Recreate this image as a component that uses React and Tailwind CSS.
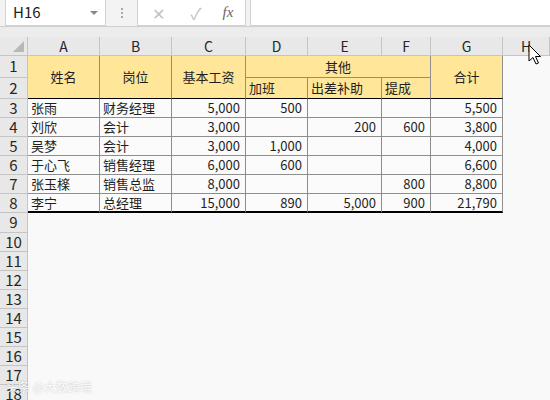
import React from 'react';

const COLS = ['A', 'B', 'C', 'D', 'E', 'F', 'G', 'H'];

// Data rows 3-8: name, role, base, overtime, travel, commission, total
const ROWS = [
  ['张雨', '财务经理', '5,000', '500', '', '', '5,500'],
  ['刘欣', '会计', '3,000', '', '200', '600', '3,800'],
  ['吴梦', '会计', '3,000', '1,000', '', '', '4,000'],
  ['于心飞', '销售经理', '6,000', '600', '', '', '6,600'],
  ['张玉檪', '销售总监', '8,000', '', '', '800', '8,800'],
  ['李宁', '总经理', '15,000', '890', '5,000', '900', '21,790'],
];

const cellBorder = 'border-r border-b border-[#8e8e8e]';
const rowHead =
  'flex items-center justify-center bg-[#e8e8e8] border-r border-b border-[#c4c4c4] text-[15px] text-[#262626]';
const mergedHead =
  'row-span-2 flex items-center justify-center bg-[#ffe699] border-r border-b border-r-[#8e8e8e] border-b-black';
const subHead =
  'flex items-end pl-[3px] pb-[1px] bg-[#ffe699] border-r border-b border-r-[#8e8e8e] border-b-black';

function Cursor() {
  return (
    <svg className="absolute left-[528px] top-[44px]" width="14" height="22" viewBox="0 0 14 22">
      <path
        d="M1 1 L1 17 L5 13.5 L8 20 L10.5 19 L7.5 12.5 L12.5 12.5 Z"
        fill="#fff"
        stroke="#000"
        strokeWidth="1"
        strokeLinejoin="round"
      />
    </svg>
  );
}

function App() {
  return (
    <div className="relative w-[550px] h-[400px] overflow-hidden bg-[#ececec] font-['Noto_Sans_CJK_SC','Noto_Sans',sans-serif] text-[#1f1f1f]">
      {/* formula bar */}
      <div className="flex h-[27px] bg-[#f3f3f3] border-b border-[#cfcfcf]">
        <div className="ml-[5px] w-[101px] h-[26px] bg-white border border-t-0 border-[#d2d2d2] flex items-center justify-between pl-[7px] pr-[7px]">
          <span className="text-[15px] text-[#222]">H16</span>
          <span className="w-0 h-0 border-l-[4px] border-r-[4px] border-t-[4px] border-l-transparent border-r-transparent border-t-[#8a8a8a]" />
        </div>
        <div className="w-[31px] flex flex-col items-center justify-center gap-[2px]">
          <span className="w-[2px] h-[2px] bg-[#a8a8a8]" />
          <span className="w-[2px] h-[2px] bg-[#a8a8a8]" />
          <span className="w-[2px] h-[2px] bg-[#a8a8a8]" />
        </div>
        <div className="w-[109px] h-[26px] bg-white border border-t-0 border-[#d2d2d2] flex items-center text-[#c2c2c2]">
          <span className="w-[40px] text-center text-[16px]">✕</span>
          <span className="w-[36px] text-center text-[16px]">✓</span>
          <span className="w-[28px] text-center text-[15px] italic font-['Liberation_Serif',serif] text-[#666]">fx</span>
        </div>
        <div className="ml-[4px] flex-1 h-[26px] bg-white border border-t-0 border-r-0 border-[#d2d2d2]" />
      </div>

      <div className="h-[10px]" />

      {/* sheet */}
      <div className="grid grid-cols-[28px_72px_72px_74px_62px_74px_49px_72px_1fr] grid-rows-[19px_22px_21px_repeat(6,19px)_20px_repeat(9,19px)] text-[13px]">
        {/* column headers */}
        <div className="flex items-end justify-end pr-[3px] pb-[3px] bg-[#e8e8e8] border-r border-b border-[#c4c4c4]">
          <svg width="11" height="11" viewBox="0 0 11 11">
            <path d="M11 0 L11 11 L0 11 Z" fill="#b8b8b8" />
          </svg>
        </div>
        {COLS.map((c) => (
          <div
            key={c}
            className="flex items-center justify-center bg-[#e8e8e8] border-r border-b border-[#c4c4c4] text-[14px] text-[#262626]"
          >
            {c}
          </div>
        ))}

        {/* rows 1-2 header block */}
        <div className={rowHead}>1</div>
        <div className={mergedHead}>姓名</div>
        <div className={mergedHead}>岗位</div>
        <div className={mergedHead}>基本工资</div>
        <div className={`col-span-3 flex items-center justify-center bg-[#ffe699] ${cellBorder}`}>其他</div>
        <div className={mergedHead}>合计</div>
        <div className="row-span-2 bg-[#f9f9f9]" />

        <div className={rowHead}>2</div>
        <div className={subHead}>加班</div>
        <div className={subHead}>出差补助</div>
        <div className={subHead}>提成</div>

        {/* data rows 3-8 */}
        {ROWS.map((r, i) => {
          const last = i === ROWS.length - 1;
          const bottom = last ? 'border-b-2 border-b-black' : 'border-b border-b-[#8e8e8e]';
          return (
            <React.Fragment key={i}>
              <div className={rowHead}>{i + 3}</div>
              {r.map((v, j) => (
                <div
                  key={j}
                  className={`flex items-center bg-[#fbfbfb] border-r border-r-[#8e8e8e] ${bottom} ${
                    j < 2 ? 'justify-start pl-[3px]' : 'justify-end pr-[5px]'
                  }`}
                >
                  {v}
                </div>
              ))}
              <div className="bg-[#f9f9f9]" />
            </React.Fragment>
          );
        })}

        {/* empty rows 9-18 */}
        {[9, 10, 11, 12, 13, 14, 15, 16, 17, 18].map((n) => (
          <React.Fragment key={n}>
            <div className={rowHead}>{n}</div>
            <div className="col-span-8 bg-[#f9f9f9]" />
          </React.Fragment>
        ))}
      </div>

      {/* watermark */}
      <div className="absolute left-[6px] top-[378px] text-[12px] text-white/90 [text-shadow:0_0_2px_rgba(0,0,0,0.25)]">
        头条 @大数跨境
      </div>

      <Cursor />
    </div>
  );
}

export default App;
